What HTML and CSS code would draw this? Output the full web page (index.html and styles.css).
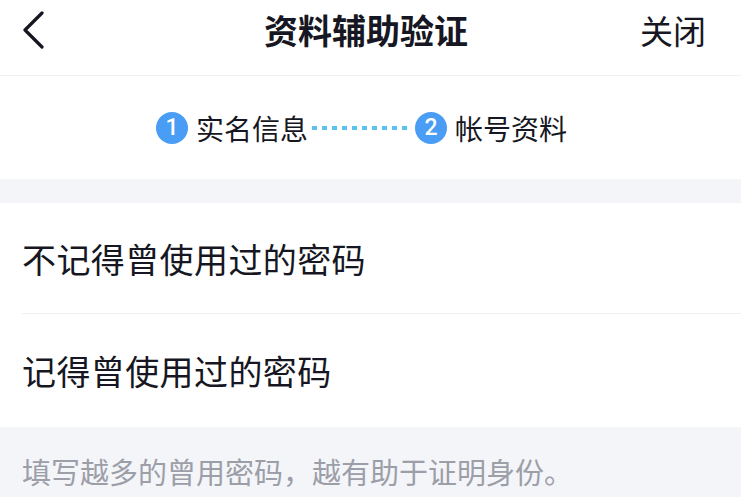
FILE: index.html
```html
<!DOCTYPE html>
<html lang="zh-CN">
<head>
  <meta charset="UTF-8">
  <title>资料辅助验证</title>
  <link rel="stylesheet" href="styles.css">
</head>
<body>

  <header class="topbar">
    <span class="back">
      <svg width="24" height="38" viewBox="0 0 24 38">
        <path d="M20 2 L3 19 L20 36" fill="none" stroke="#15161f" stroke-width="3.2" stroke-linecap="round" stroke-linejoin="round"/>
      </svg>
    </span>
    <h1 class="title">资料辅助验证</h1>
    <span class="close">关闭</span>
  </header>

  <div class="steps">
    <span class="num">1</span>
    <span class="step-text">实名信息</span>
    <span class="dots"></span>
    <span class="num">2</span>
    <span class="step-text">帐号资料</span>
  </div>

  <div class="gap"></div>

  <ul class="options">
    <li class="option first">不记得曾使用过的密码</li>
    <li class="option second">记得曾使用过的密码</li>
  </ul>

  <p class="tip">填写越多的曾用密码，越有助于证明身份。</p>

</body>
</html>
```

FILE: styles.css
```css
body { margin: 0; background: #f4f5f8; color: #161722; font-family: "Noto Sans CJK SC", "Noto Sans", sans-serif; width: 741px; height: 497px; overflow: hidden; }

.topbar { display: flex; align-items: center; justify-content: space-between; box-sizing: border-box; height: 76px; padding: 0 35px 16px 22px; background: #fff; border-bottom: 1px solid #f0f1f4; position: relative; }
.back { display: flex; width: 24px; height: 38px; }
.title { position: absolute; left: 0; right: 9px; top: 10px; margin: 0; text-align: center; font-size: 34px; font-weight: 700; line-height: 40px; pointer-events: none; }
.close { font-size: 33px; line-height: 40px; }

.steps { display: flex; align-items: center; justify-content: center; height: 103px; background: #fff; padding-right: 14px; }
.num { display: flex; align-items: center; justify-content: center; width: 32px; height: 32px; border-radius: 50%; background: #4a9df5; color: #fff; font-family: "Roboto", sans-serif; font-size: 23px; font-weight: 500; }
.step-text { font-size: 28px; line-height: 36px; margin: 0 4px 0 8px; }
.dots { width: 95px; height: 4px; margin-right: 8px; background-image: linear-gradient(to right, #5cc1f1 5px, transparent 5px); background-size: 10px 4px; }

.gap { height: 24px; }

.options { list-style: none; margin: 0; padding: 0 0 0 22px; background: #fff; }
.option { display: flex; align-items: center; font-size: 34px; letter-spacing: 0.4px; }
.first { height: 110px; border-bottom: 1px solid #eeeff3; }
.second { height: 113px; }

.tip { margin: 0; padding: 24px 22px 0; font-size: 29px; line-height: 40px; color: #9c9ea8; }
```
